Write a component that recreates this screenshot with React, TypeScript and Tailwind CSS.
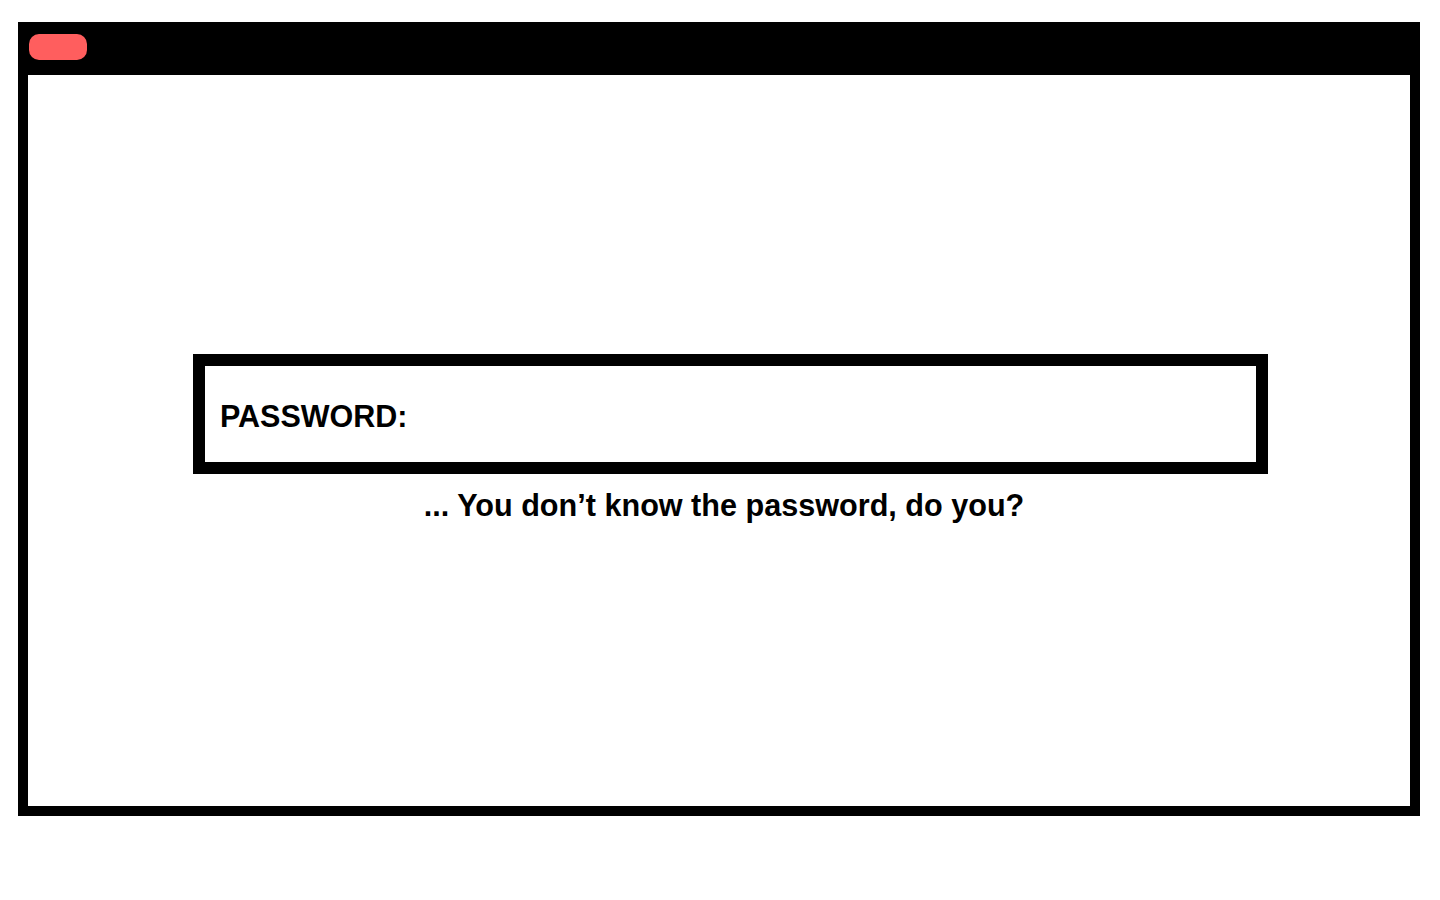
export default function App() {
  return (
    <div className="min-h-screen w-full bg-white pt-[22px] pl-[18px] font-['Liberation_Sans',Arial,sans-serif] text-black">
      <div className="flex h-[794px] w-[1402px] flex-col bg-black px-[10px] pb-[10px]">
        {/* title bar */}
        <div className="h-[53px] shrink-0 pt-[12px] pl-[1px]">
          <div className="h-[26px] w-[58px] rounded-[10px] bg-[#ff5e5e]" />
        </div>

        {/* window body */}
        <div className="flex-1 bg-white pt-[279px]">
          <div className="ml-[165px] h-[120px] w-[1075px] border-[12px] border-black bg-white pt-[33px] pl-[15px]">
            <span className="block text-[30.5px] font-bold leading-[34px]">
              PASSWORD:
            </span>
          </div>
          <p className="mt-[14px] pl-[10px] text-center text-[30.6px] font-bold leading-[34px]">
            ... You don’t know the password, do you?
          </p>
        </div>
      </div>
    </div>
  );
}
